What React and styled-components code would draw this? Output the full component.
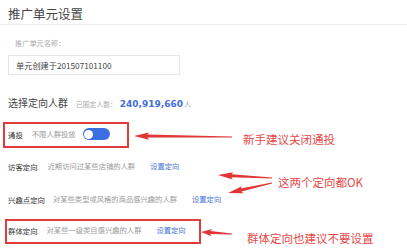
import React from "react";
import styled, { createGlobalStyle } from "styled-components";

const Global = createGlobalStyle`
  html, body { margin: 0; padding: 0; background: #fff; }
  body { font-family: "Noto Sans CJK SC", "Noto Sans", sans-serif; }
`;

const Page = styled.div`
  position: relative;
  width: 407px;
  height: 249px;
  overflow: hidden;
  background: #fff;
`;

const Header = styled.div`
  height: 25px;
  border-bottom: 1px solid #ececec;
  padding: 6px 0 0 8px;
  box-sizing: border-box;
  font-size: 12.5px;
  line-height: 16px;
  color: #444;
`;

const Body = styled.div`
  padding: 13px 0 0 8px;
  display: flex;
  flex-direction: column;
`;

const FieldLabel = styled.div`
  padding-left: 7px;
  font-size: 7.2px;
  line-height: 10px;
  color: #aaa;
`;

const NameInput = styled.div`
  margin-top: 7px;
  width: 172px;
  height: 20px;
  box-sizing: border-box;
  border: 1px solid #e6e6e6;
  padding-left: 7px;
  display: flex;
  align-items: center;
  font-size: 8.2px;
  color: #444;
`;

const Section = styled.div`
  margin-top: 20px;
  display: flex;
  align-items: baseline;
  height: 16px;
`;

const SectionTitle = styled.span`
  font-size: 10px;
  color: #444;
`;

const Count = styled.span`
  margin-left: 8px;
  font-size: 6.8px;
  color: #aaa;
`;

const Number = styled.span`
  margin-left: 3px;
  font-family: "DejaVu Sans", Verdana, sans-serif;
  font-weight: bold;
  font-size: 9px;
  color: #3f6fd9;
`;

const Unit = styled.span`
  font-size: 6.8px;
  color: #aaa;
  margin-left: 1px;
`;

const Rows = styled.div`
  margin-top: 7px;
  display: flex;
  flex-direction: column;
`;

const Row = styled.div`
  height: ${(p) => p.h}px;
  display: flex;
  align-items: center;
`;

const RowLabel = styled.span`
  font-size: 7.4px;
  color: #333;
  margin-right: ${(p) => p.gap}px;
`;

const Desc = styled.span`
  font-size: 7.3px;
  color: #9a9a9a;
  margin-right: ${(p) => p.gap}px;
`;

const Link = styled.span`
  font-size: 7.3px;
  color: #4b76d8;
`;

const Toggle = styled.span`
  position: relative;
  width: 27px;
  height: 12px;
  border-radius: 6px;
  background: #3b6fe0;
  display: inline-block;
`;

const Knob = styled.span`
  position: absolute;
  left: 1.5px;
  top: 1.5px;
  width: 9px;
  height: 9px;
  border-radius: 50%;
  background: #fff;
`;

const Highlight = styled.div`
  position: absolute;
  left: ${(p) => p.x}px;
  top: ${(p) => p.y}px;
  width: ${(p) => p.w}px;
  height: ${(p) => p.h}px;
  box-sizing: border-box;
  border: 2px solid #e23b3b;
  pointer-events: none;
`;

const Note = styled.div`
  position: absolute;
  left: ${(p) => p.x}px;
  top: ${(p) => p.y}px;
  font-size: 11.5px;
  line-height: 14px;
  color: #e54848;
  white-space: nowrap;
`;

const Overlay = styled.svg`
  position: absolute;
  left: 0;
  top: 0;
  pointer-events: none;
`;

function arrowPoints(tx, ty, ex, ey) {
  const dx = ex - tx;
  const dy = ey - ty;
  const len = Math.hypot(dx, dy);
  const ux = dx / len;
  const uy = dy / len;
  const nx = -uy;
  const ny = ux;
  const head = Math.min(15, len * 0.35);
  const hw = 3.6;
  const sw = 1.5;
  const tw = 0.4;
  const bx = tx + ux * head;
  const by = ty + uy * head;
  const p = [
    [tx, ty],
    [bx + nx * hw, by + ny * hw],
    [bx + ux * -1.5 + nx * sw, by + uy * -1.5 + ny * sw],
    [ex + nx * tw, ey + ny * tw],
    [ex - nx * tw, ey - ny * tw],
    [bx + ux * -1.5 - nx * sw, by + uy * -1.5 - ny * sw],
    [bx - nx * hw, by - ny * hw],
  ];
  return p.map((q) => q.map((v) => v.toFixed(1)).join(",")).join(" ");
}

const arrows = [
  [134, 136, 232, 137],
  [218, 175, 272, 178],
  [228, 193, 272, 183],
  [201, 232, 232, 234],
];

export default function App() {
  return (
    <Page>
      <Global />
      <Header>推广单元设置</Header>
      <Body>
        <FieldLabel>推广单元名称：</FieldLabel>
        <NameInput>单元创建于201507101100</NameInput>
        <Section>
          <SectionTitle>选择定向人群</SectionTitle>
          <Count>已圈定人数：</Count>
          <Number>240,919,660</Number>
          <Unit>人</Unit>
        </Section>
        <Rows>
          <Row h={32}>
            <RowLabel gap={9}>通投</RowLabel>
            <Desc gap={7}>不限人群投放</Desc>
            <Toggle>
              <Knob />
            </Toggle>
          </Row>
          <Row h={32}>
            <RowLabel gap={10}>访客定向</RowLabel>
            <Desc gap={15}>近期访问过某些店铺的人群</Desc>
            <Link>设置定向</Link>
          </Row>
          <Row h={34}>
            <RowLabel gap={8}>兴趣点定向</RowLabel>
            <Desc gap={15}>对某些类型或风格的商品感兴趣的人群</Desc>
            <Link>设置定向</Link>
          </Row>
          <Row h={28}>
            <RowLabel gap={9}>群体定向</RowLabel>
            <Desc gap={15}>对某些一级类目感兴趣的人群</Desc>
            <Link>设置定向</Link>
          </Row>
        </Rows>
      </Body>
      <Highlight x={3} y={122} w={126} h={26} />
      <Highlight x={5} y={219} w={196} h={25} />
      <Overlay width="407" height="249" viewBox="0 0 407 249">
        {arrows.map((a, i) => (
          <polygon key={i} points={arrowPoints(...a)} fill="#e23535" />
        ))}
      </Overlay>
      <Note x={243} y={132}>新手建议关闭通投</Note>
      <Note x={278} y={175}>这两个定向都OK</Note>
      <Note x={247} y={231}>群体定向也建议不要设置</Note>
    </Page>
  );
}
